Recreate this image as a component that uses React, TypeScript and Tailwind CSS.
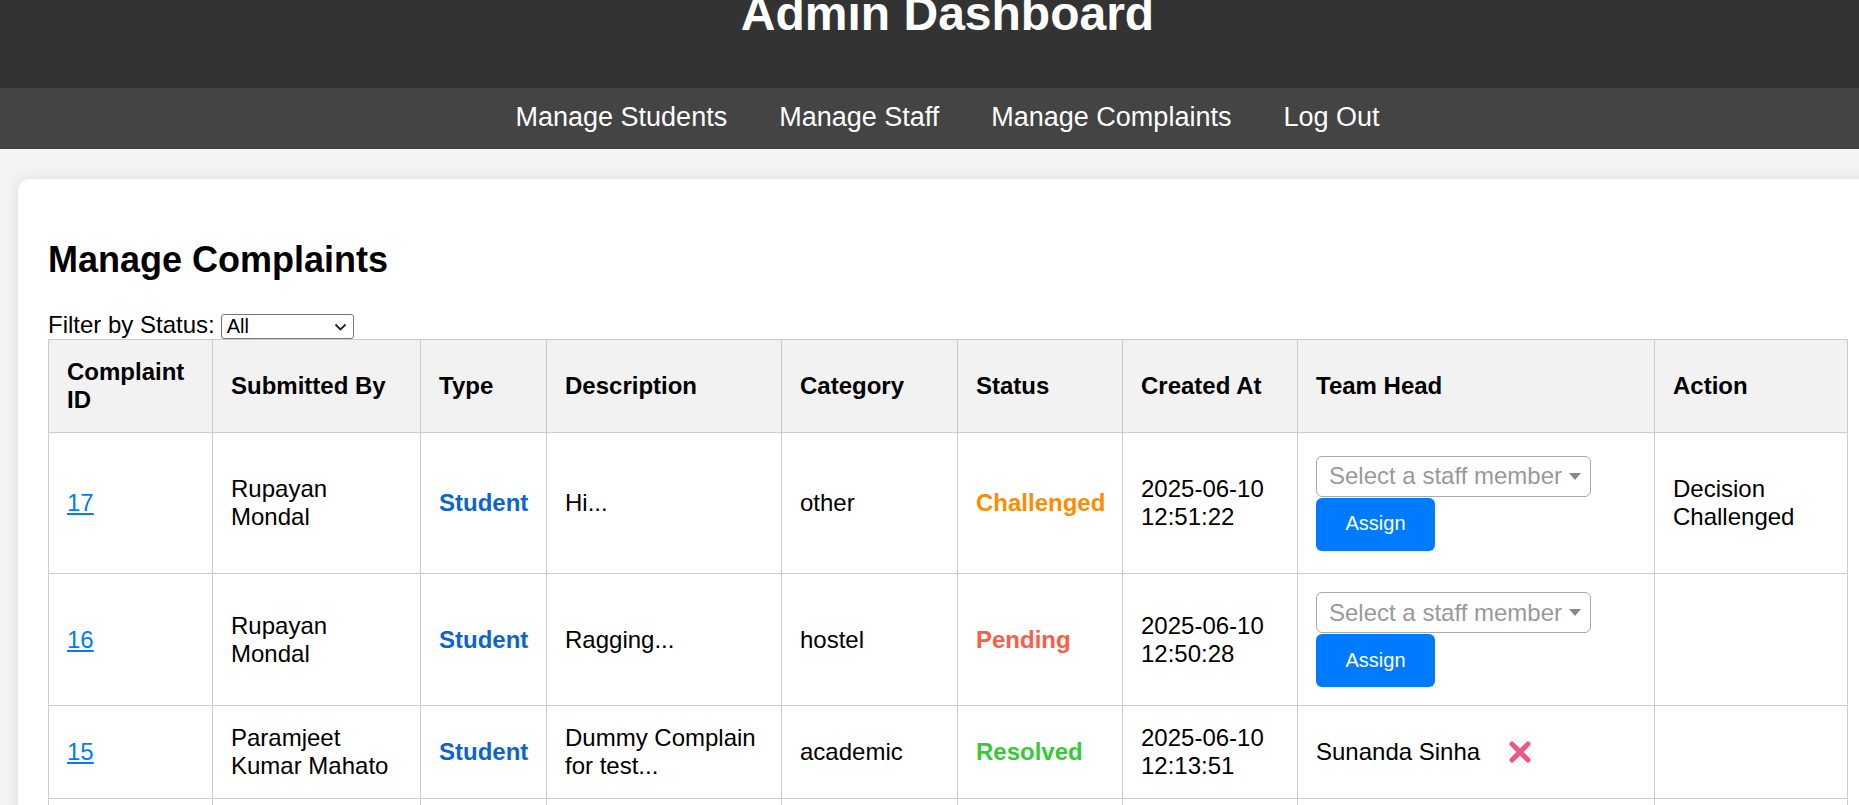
import React from "react";

function StaffSelect() {
  return (
    <div className="flex items-center justify-between w-[275px] h-[41px] border border-[#aaaaaa] rounded-[6px] bg-white pl-[12px] pr-[9px]">
      <span className="text-[24px] leading-[28px] text-[#999999] whitespace-nowrap">Select a staff member</span>
      <svg width="12" height="7" viewBox="0 0 12 7" className="ml-[4px]">
        <path d="M0 0 L12 0 L6 7 Z" fill="#888888" />
      </svg>
    </div>
  );
}

function AssignBlock() {
  return (
    <div className="flex flex-col items-start">
      <StaffSelect />
      <button className="w-[119px] h-[53px] bg-[#007bff] text-white text-[20px] rounded-[6px] mt-[1px]">Assign</button>
    </div>
  );
}

function XIcon() {
  return (
    <svg width="24" height="24" viewBox="0 0 24 24" className="ml-[28px]">
      <path d="M4 4 L20 20 M20 4 L4 20" stroke="#f0577a" strokeWidth="5" strokeLinecap="round" />
    </svg>
  );
}

type Row = {
  id: string;
  by: string;
  type: string;
  desc: string;
  cat: string;
  status: string;
  statusCls: string;
  date: string;
  time: string;
  head: React.ReactNode;
  action: string;
  h: string;
};

const rows: Row[] = [
  {
    id: "17",
    by: "Rupayan Mondal",
    type: "Student",
    desc: "Hi...",
    cat: "other",
    status: "Challenged",
    statusCls: "text-[#ff8c00]",
    date: "2025-06-10",
    time: "12:51:22",
    head: <AssignBlock />,
    action: "Decision Challenged",
    h: "h-[141px]",
  },
  {
    id: "16",
    by: "Rupayan Mondal",
    type: "Student",
    desc: "Ragging...",
    cat: "hostel",
    status: "Pending",
    statusCls: "text-[#ff5c47]",
    date: "2025-06-10",
    time: "12:50:28",
    head: <AssignBlock />,
    action: "",
    h: "h-[132px]",
  },
  {
    id: "15",
    by: "Paramjeet Kumar Mahato",
    type: "Student",
    desc: "Dummy Complain for test...",
    cat: "academic",
    status: "Resolved",
    statusCls: "text-[#33cc33]",
    date: "2025-06-10",
    time: "12:13:51",
    head: (
      <div className="flex items-center">
        <span>Sunanda Sinha</span>
        <XIcon />
      </div>
    ),
    action: "",
    h: "h-[93px]",
  },
  {
    id: "",
    by: "",
    type: "",
    desc: "",
    cat: "",
    status: "",
    statusCls: "",
    date: "",
    time: "",
    head: null,
    action: "",
    h: "h-[93px]",
  },
];

const th = "border border-[#cccccc] p-[18px] text-left align-middle font-bold";
const td = "border border-[#cccccc] p-[18px] text-left align-middle";

export default function App() {
  return (
    <div className="w-[1859px] h-[805px] overflow-hidden bg-[#f4f4f4] font-['Liberation_Sans',Arial,sans-serif] text-black">
      <div className="w-[1895px]">
        <header className="h-[88px] bg-[#333333] overflow-hidden">
          <h1 className="mt-[-14px] text-center text-white font-bold text-[48px] leading-[55px]">Admin Dashboard</h1>
        </header>
        <nav className="h-[61px] bg-[#444444] flex items-center justify-center gap-[52px] pb-[2px]">
          <a className="text-white text-[27px] leading-[31px]">Manage Students</a>
          <a className="text-white text-[27px] leading-[31px]">Manage Staff</a>
          <a className="text-white text-[27px] leading-[31px]">Manage Complaints</a>
          <a className="text-white text-[27px] leading-[31px]">Log Out</a>
        </nav>
        <main className="ml-[18px] mt-[30px] w-[1859px] bg-white rounded-[12px] shadow-[0_0_15px_rgba(0,0,0,0.1)] p-[30px] pb-[60px]">
          <h2 className="mt-[30px] mb-[30px] text-[36px] leading-[41px] font-bold">Manage Complaints</h2>
          <div className="flex h-[29px]">
            <span className="text-[24px] leading-[28px] self-center">Filter by Status:</span>
            <div className="self-end ml-[6px] w-[133px] h-[25px] border border-[#767676] rounded-[3px] bg-white flex items-center justify-between pl-[5px] pr-[6px]">
              <span className="text-[20px] leading-[23px]">All</span>
              <svg width="13" height="8" viewBox="0 0 13 8">
                <path d="M1.5 1.5 L6.5 6.5 L11.5 1.5" stroke="#222222" strokeWidth="1.8" fill="none" />
              </svg>
            </div>
          </div>
          <table className="w-[1799px] table-fixed border-collapse text-[24px] leading-[27.6px]">
            <colgroup>
              <col className="w-[164px]" />
              <col className="w-[208px]" />
              <col className="w-[126px]" />
              <col className="w-[235px]" />
              <col className="w-[176px]" />
              <col className="w-[165px]" />
              <col className="w-[175px]" />
              <col className="w-[357px]" />
              <col className="w-[193px]" />
            </colgroup>
            <thead>
              <tr className="h-[93px] bg-[#f2f2f2]">
                <th className={th}>Complaint ID</th>
                <th className={th}>Submitted By</th>
                <th className={th}>Type</th>
                <th className={th}>Description</th>
                <th className={th}>Category</th>
                <th className={th}>Status</th>
                <th className={th}>Created At</th>
                <th className={th}>Team Head</th>
                <th className={th}>Action</th>
              </tr>
            </thead>
            <tbody>
              {rows.map((r, i) => (
                <tr key={i} className={r.h}>
                  <td className={td}>
                    {r.id ? <a className="text-[#007bff] underline">{r.id}</a> : null}
                  </td>
                  <td className={td}>{r.by}</td>
                  <td className={td + " font-bold text-[#0a66cc]"}>{r.type}</td>
                  <td className={td}>{r.desc}</td>
                  <td className={td}>{r.cat}</td>
                  <td className={td + " font-bold whitespace-nowrap " + r.statusCls}>{r.status}</td>
                  <td className={td}>
                    {r.date ? `${r.date} ${r.time}` : ""}
                  </td>
                  <td className={td}>{r.head}</td>
                  <td className={td}>{r.action}</td>
                </tr>
              ))}
            </tbody>
          </table>
        </main>
      </div>
    </div>
  );
}
